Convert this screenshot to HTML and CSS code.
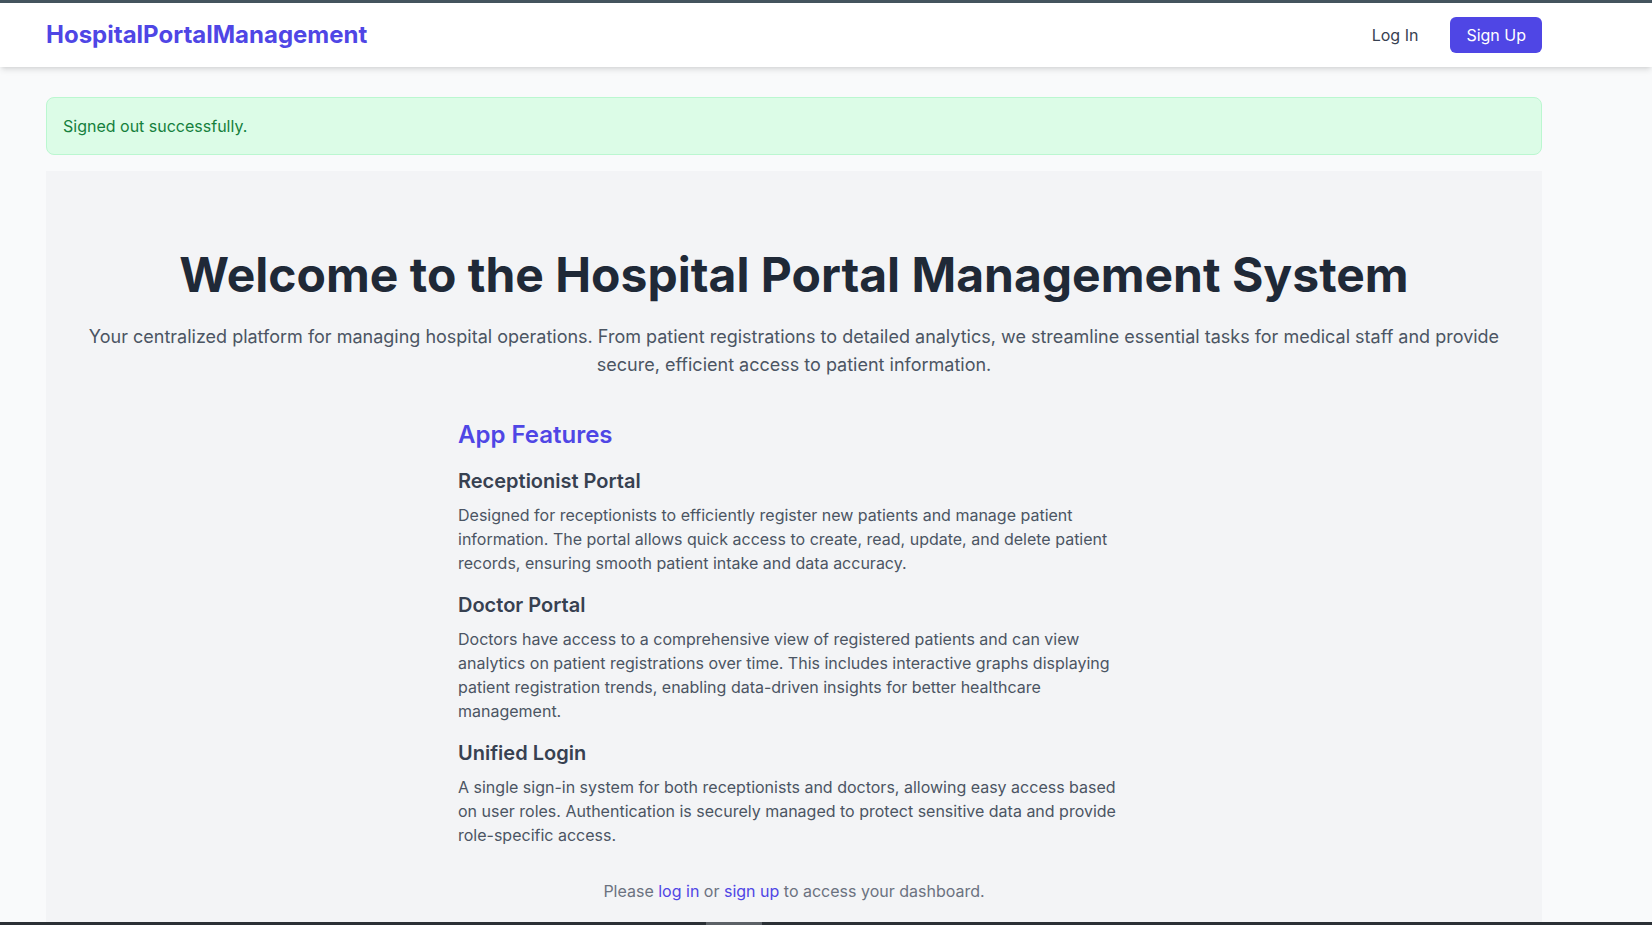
FILE: index.html
```html
<!DOCTYPE html>
<html lang="en">
<head>
<meta charset="utf-8">
<title>HospitalPortalManagement</title>
<link rel="stylesheet" href="styles.css">
</head>
<body>
<div class="topline"></div>
<header class="header">
  <div class="header-inner">
    <a class="logo" href="#">HospitalPortalManagement</a>
    <nav class="nav">
      <a class="nav-link" href="#">Log In</a>
      <a class="nav-btn" href="#">Sign Up</a>
    </nav>
  </div>
</header>
<main class="main">
  <div class="alert">Signed out successfully.</div>
  <section class="hero">
    <h1 class="title">Welcome to the Hospital Portal Management System</h1>
    <p class="lead">Your centralized platform for managing hospital operations. From patient registrations to detailed analytics, we streamline essential tasks for medical staff and provide secure, efficient access to patient information.</p>
    <div class="features">
      <h2 class="features-title">App Features</h2>
      <div class="feature">
        <h3 class="feature-title">Receptionist Portal</h3>
        <p class="feature-text">Designed for receptionists to efficiently register new patients and manage patient information. The portal allows quick access to create, read, update, and delete patient records, ensuring smooth patient intake and data accuracy.</p>
      </div>
      <div class="feature">
        <h3 class="feature-title">Doctor Portal</h3>
        <p class="feature-text">Doctors have access to a comprehensive view of registered patients and can view analytics on patient registrations over time. This includes interactive graphs displaying patient registration trends, enabling data-driven insights for better healthcare management.</p>
      </div>
      <div class="feature">
        <h3 class="feature-title">Unified Login</h3>
        <p class="feature-text">A single sign-in system for both receptionists and doctors, allowing easy access based on user roles. Authentication is securely managed to protect sensitive data and provide role-specific access.</p>
      </div>
    </div>
    <p class="cta">Please <a href="#">log in</a> or <a href="#">sign up</a> to access your dashboard.</p>
  </section>
</main>
<div class="bottombar"><div class="thumb"></div></div>
</body>
</html>
```

FILE: styles.css
```css
* { box-sizing: border-box; }
html, body { margin: 0; padding: 0; }
body {
  font-family: Inter, "Noto Sans", "Liberation Sans", sans-serif;
  background: #f9fafb;
  color: #1f2937;
  overflow: hidden;
  height: 925px;
}
a { text-decoration: none; }
.topline { height: 3px; background: #44545e; }
.header {
  background: #ffffff;
  height: 64px;
  box-shadow: 0 4px 6px -1px rgba(0,0,0,0.1), 0 2px 4px -2px rgba(0,0,0,0.1);
  position: relative;
  z-index: 1;
}
.header-inner {
  width: 1496px;
  margin-left: 46px;
  height: 100%;
  display: flex;
  align-items: center;
  justify-content: space-between;
}
.logo {
  font-size: 24px;
  line-height: 32px;
  font-weight: 700;
  color: #4f46e5;
}
.nav { display: flex; align-items: center; gap: 16px; }
.nav-link {
  color: #374151;
  font-size: 16px;
  line-height: 20px;
  padding: 8px 16px;
}
.nav-btn {
  background: #4f46e5;
  color: #ffffff;
  font-size: 16px;
  line-height: 20px;
  padding: 8px 16px;
  border-radius: 6px;
}
.main {
  width: 1496px;
  margin-left: 46px;
  padding-top: 30px;
}
.alert {
  background: #dcfce7;
  border: 1px solid #bbf7d0;
  color: #15803d;
  border-radius: 8px;
  padding: 16px;
  font-size: 16px;
  line-height: 24px;
  margin-bottom: 16px;
}
.hero {
  background: #f3f4f6;
  padding: 80px 40px 40px;
  text-align: center;
}
.title {
  margin: 0 0 24px;
  font-size: 48px;
  line-height: 48px;
  font-weight: 700;
  color: #1f2937;
}
.lead {
  margin: 0 0 40px;
  font-size: 18px;
  line-height: 28px;
  color: #4b5563;
}
.features {
  max-width: 672px;
  margin: 0 auto;
  text-align: left;
}
.features-title {
  margin: 0 0 16px;
  font-size: 24px;
  line-height: 32px;
  font-weight: 600;
  color: #4f46e5;
}
.feature { margin-bottom: 16px; }
.feature-title {
  margin: 0 0 8px;
  font-size: 20px;
  line-height: 28px;
  font-weight: 600;
  color: #374151;
}
.feature-text {
  margin: 0;
  font-size: 16px;
  line-height: 24px;
  color: #4b5563;
}
.cta {
  margin: 32px 0 0;
  font-size: 16px;
  line-height: 24px;
  color: #6b7280;
}
.cta a { color: #4f46e5; }
.bottombar {
  position: fixed;
  left: 0;
  right: 0;
  bottom: 0;
  height: 3px;
  background: #2b3035;
}
.thumb {
  position: absolute;
  left: 706px;
  width: 56px;
  top: 0;
  height: 3px;
  background: #5c6166;
}
```
